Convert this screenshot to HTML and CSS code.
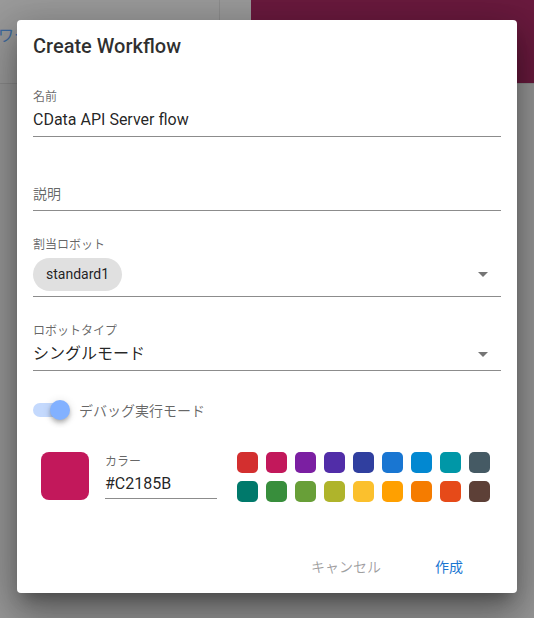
FILE: index.html
```html
<!DOCTYPE html>
<html lang="ja">
<head>
  <meta charset="UTF-8" />
  <meta name="viewport" content="width=device-width, initial-scale=1.0" />
  <title>Create Workflow</title>
  <link rel="stylesheet" href="styles.css">
</head>
<body>
  <!-- Page behind the overlay -->
  <div class="page">
    <div class="page-header">
      <div class="header-left">
        <div class="header-link-clip">
          <span class="header-link">ワークフロー</span>
        </div>
        <div class="header-divider"></div>
      </div>
      <div class="header-brand"></div>
    </div>
  </div>

  <!-- Dialog -->
  <div class="dialog">
    <div class="dialog-title">Create Workflow</div>

    <div class="dialog-body">
      <div class="field">
        <div class="field-label">名前</div>
        <div class="field-input">CData API Server flow</div>
      </div>

      <div class="field">
        <div class="field-label"></div>
        <div class="field-input placeholder">説明</div>
      </div>

      <div class="field">
        <div class="field-label">割当ロボット</div>
        <div class="field-input select chip-row">
          <span class="chip">standard1</span>
          <span class="arrow"></span>
        </div>
      </div>

      <div class="field">
        <div class="field-label">ロボットタイプ</div>
        <div class="field-input select">
          <span>シングルモード</span>
          <span class="arrow"></span>
        </div>
      </div>

      <div class="switch-row">
        <div class="switch">
          <div class="switch-track"></div>
          <div class="switch-thumb"></div>
        </div>
        <span class="switch-label">デバッグ実行モード</span>
      </div>

      <div class="color-row">
        <div class="color-preview" style="background-color: #C2185B;"></div>
        <div class="color-field">
          <div class="field-label">カラー</div>
          <div class="field-input">#C2185B</div>
        </div>
        <div class="palette" id="palette"></div>
      </div>
    </div>

    <div class="dialog-actions">
      <button class="btn btn-cancel">キャンセル</button>
      <button class="btn btn-create">作成</button>
    </div>
  </div>

  <script>
    // Material palette swatches
    const colors = [
      '#D32F2F', '#C2185B', '#7B1FA2', '#512DA8', '#303F9F', '#1976D2', '#0288D1', '#0097A7', '#455A64',
      '#00796B', '#388E3C', '#689F38', '#AFB42B', '#FBC02D', '#FFA000', '#F57C00', '#E64A19', '#5D4037'
    ];
    const palette = document.getElementById('palette');
    colors.forEach(c => {
      const swatch = document.createElement('div');
      swatch.className = 'swatch';
      swatch.style.backgroundColor = c;
      palette.appendChild(swatch);
    });
  </script>
</body>
</html>
```

FILE: styles.css
```css
body {
  margin: 0;
  width: 534px;
  height: 618px;
  overflow: hidden;
  background-color: #999999;
  font-family: Roboto, "Noto Sans CJK JP", sans-serif;
}
/* Page behind the dialog (already dimmed by overlay) */
.page-header {
  display: flex;
  height: 83px;
  border-bottom: 1px solid #8c8c8c;
}
.header-left {
  position: relative;
  width: 251px;
  background-color: #9b9b9b;
}
.header-link-clip {
  position: absolute;
  left: 0;
  top: 22px;
  width: 17px;
  overflow: hidden;
  white-space: nowrap;
}
.header-link {
  margin-left: -2px;
  font-size: 16px;
  color: #3d6aa0;
}
.header-divider {
  position: absolute;
  left: 219px;
  top: 0;
  bottom: 0;
  width: 1px;
  background-color: #8e8e8e;
}
.header-brand {
  flex: 1;
  background-color: #6a1a3e;
}
/* Dialog card */
.dialog {
  position: absolute;
  left: 17px;
  top: 20px;
  width: 500px;
  height: 573px;
  background-color: #fff;
  border-radius: 4px;
  box-shadow: 0 11px 15px -7px rgba(0, 0, 0, 0.3),
              0 24px 38px 3px rgba(0, 0, 0, 0.22),
              0 9px 46px 8px rgba(0, 0, 0, 0.2);
  display: flex;
  flex-direction: column;
}
.dialog-title {
  padding: 10px 16px 0;
  font-size: 20px;
  line-height: 32px;
  font-weight: 500;
  color: rgba(0, 0, 0, 0.82);
}
.dialog-body {
  padding: 27px 16px 0;
  display: flex;
  flex-direction: column;
  gap: 26px;
}
.field-label {
  height: 16px;
  font-size: 12px;
  line-height: 16px;
  color: rgba(0, 0, 0, 0.6);
}
.field-input {
  margin-top: 3px;
  padding-bottom: 4px;
  line-height: 24px;
  font-size: 16px;
  color: rgba(0, 0, 0, 0.87);
  border-bottom: 1px solid rgba(0, 0, 0, 0.45);
}
.field-input.placeholder {
  font-size: 14px;
  color: rgba(0, 0, 0, 0.6);
}
.select {
  display: flex;
  align-items: center;
  justify-content: space-between;
  padding-right: 13px;
}
.chip-row {
  height: 36px;
}
.chip {
  height: 33px;
  line-height: 33px;
  padding: 0 13px;
  border-radius: 17px;
  background-color: #e0e0e0;
  font-size: 14px;
}
.arrow {
  width: 0;
  height: 0;
  border-left: 5px solid transparent;
  border-right: 5px solid transparent;
  border-top: 5px solid rgba(0, 0, 0, 0.54);
}
/* Debug switch */
.switch-row {
  display: flex;
  align-items: center;
  gap: 9px;
  margin-top: 1px;
  height: 24px;
}
.switch {
  position: relative;
  width: 37px;
  height: 20px;
}
.switch-track {
  position: absolute;
  left: 0;
  top: 3px;
  width: 36px;
  height: 14px;
  border-radius: 7px;
  background-color: #c4d9fd;
}
.switch-thumb {
  position: absolute;
  left: 17px;
  top: 0;
  width: 20px;
  height: 20px;
  border-radius: 50%;
  background-color: #82b1ff;
  box-shadow: 0 2px 4px -1px rgba(0, 0, 0, 0.2), 0 4px 5px 0 rgba(0, 0, 0, 0.14), 0 1px 10px 0 rgba(0, 0, 0, 0.12);
}
.switch-label {
  font-size: 14px;
  color: rgba(0, 0, 0, 0.6);
}
/* Colour picker */
.color-row {
  display: flex;
  align-items: flex-start;
  margin-top: 4px;
  padding-left: 8px;
}
.color-preview {
  width: 48px;
  height: 48px;
  border-radius: 8px;
}
.color-field {
  width: 112px;
  margin-left: 16px;
  margin-top: 2px;
}
.color-field .field-input {
  margin-top: 2px;
  padding-bottom: 2px;
}
.palette {
  margin-left: 20px;
  display: grid;
  grid-template-columns: repeat(9, 21px);
  grid-auto-rows: 21px;
  gap: 8px;
}
.swatch {
  border-radius: 5px;
}
/* Actions */
.dialog-actions {
  margin-top: auto;
  display: flex;
  justify-content: flex-end;
  gap: 22px;
  padding: 0 38px 9px 0;
}
.btn {
  height: 36px;
  padding: 0 16px;
  border: none;
  background: none;
  font-family: Roboto, "Noto Sans CJK JP", sans-serif;
  font-size: 14px;
}
.btn-cancel {
  color: rgba(0, 0, 0, 0.38);
}
.btn-create {
  color: #1976d2;
}
```
